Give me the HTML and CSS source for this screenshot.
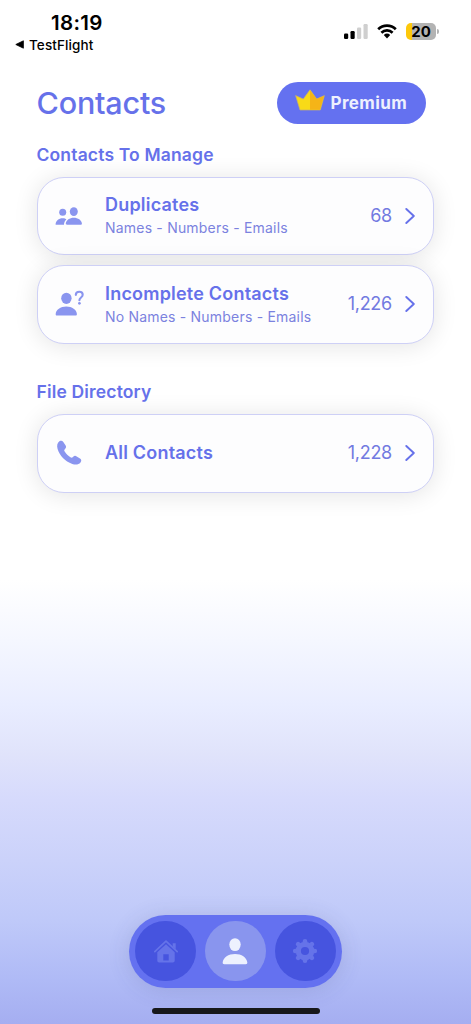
FILE: index.html
```html
<!DOCTYPE html>
<html lang="en">
<head>
<meta charset="utf-8">
<meta name="viewport" content="width=device-width, initial-scale=1">
<title>Contacts</title>
<link rel="stylesheet" href="styles.css">
</head>
<body>
<div class="screen">
  <div class="status">
    <div class="status-left">
      <div class="time"><span>18:19</span></div>
      <div class="back">
        <svg width="9" height="9" viewBox="0 0 9 9"><path d="M.8 4.5 8.4.8v7.4z" fill="#000" stroke="#000" stroke-width=".8" stroke-linejoin="round"/></svg>
        <span>TestFlight</span>
      </div>
    </div>
    <div class="status-right">
      <svg class="signal" width="24" height="16" viewBox="0 0 24 16">
        <rect x="0" y="9.5" width="4.2" height="5.5" rx="1.2" fill="#000"/>
        <rect x="6.5" y="7" width="4.2" height="8" rx="1.2" fill="#000"/>
        <rect x="13" y="3.5" width="4.2" height="11.500" rx="1.2" fill="#cfcfcf"/>
        <rect x="19.500" y="0" width="4.200" height="15" rx="1.2" fill="#cfcfcf"/>
      </svg>
      <svg class="wifi" width="20" height="15" viewBox="0 0 20 15">
        <path d="M1.200 5.200a12.600 12.600 0 0 1 17.600 0M4.400 8.700a8.100 8.100 0 0 1 11.200 0" fill="none" stroke="#000" stroke-width="2.700"/>
        <path d="M6.800 11.100a4.700 4.700 0 0 1 6.400 0L10 14.500z" fill="#000"/>
      </svg>
      <div class="battery"><div class="cell">20</div><i class="tip"></i></div>
    </div>
  </div>

  <header class="header">
    <h1><span>Contacts</span></h1>
    <button class="premium">
      <svg width="30" height="22" viewBox="0 0 30 22">
        <path d="M.6 6.600 8.300 10 15 .8l6.700 9.200 7.700-3.400L25.300 21H5z" fill="#f8da17" stroke="#c9b26b" stroke-width=".7"/>
        <path d="M15 1.200 21.700 10l7.200-3L25 20.700H15z" fill="#f5b417"/>
      </svg>
      <span>Premium</span>
    </button>
  </header>

  <main>
    <h2 class="first"><span>Contacts To Manage</span></h2>
    <a class="card">
      <svg class="icon" width="30" height="30" viewBox="0 0 30 30">
        <circle cx="8.700" cy="11.300" r="3.500"/>
        <path d="M1.600 23.700c0-4 3.200-6.500 7-6.500 2 0 3 .5 3.800 1.200-1.500 1.300-2.400 3-2.400 5.300z"/>
        <ellipse cx="19.800" cy="10.600" rx="4" ry="4.300"/>
        <path d="M12.800 23.700c-.8 0-1.100-.4-1-1.200.3-3.500 3.900-5.800 8-5.800s7.800 2.300 8.100 5.800c.1.800-.2 1.200-1 1.200z"/>
      </svg>
      <div class="label"><b>Duplicates</b><small>Names - Numbers - Emails</small></div>
      <span class="count">68</span>
      <svg class="chev" width="10" height="18" viewBox="0 0 10 18"><path d="m1.300 2 7.500 7-7.500 7"/></svg>
    </a>
    <a class="card">
      <svg class="icon" width="30" height="30" viewBox="0 0 30 30">
        <ellipse cx="12.400" cy="9.300" rx="5.200" ry="5.600"/>
        <path d="M3.100 26.500c-1.100 0-1.500-.6-1.400-1.600.2-4.300 4.800-7.500 10.600-7.500s10.400 3.200 10.600 7.500c0 1-.4 1.600-1.500 1.600z"/>
        <path d="M21.800 5.900c.2-4.300 6.900-4.100 6.900-.1 0 2.700-3.300 2.700-3.300 5.400" fill="none" stroke="#8a95ef" stroke-width="2.100" stroke-linecap="round"/><circle cx="25.400" cy="14.300" r="1.350"/>
      </svg>
      <div class="label"><b>Incomplete Contacts</b><small>No Names - Numbers - Emails</small></div>
      <span class="count">1,226</span>
      <svg class="chev" width="10" height="18" viewBox="0 0 10 18"><path d="m1.300 2 7.500 7-7.500 7"/></svg>
    </a>
    <h2 class="second"><span>File Directory</span></h2>
    <a class="card">
      <svg class="icon" width="30" height="30" viewBox="0 0 30 30">
        <path d="M5.700 3.100C7 2.300 8.400 2.600 9.300 3.900l2.200 3.300c.9 1.400.7 2.500-.5 3.700-1 1-.9 1.600-.3 2.600 1.500 2.300 3.400 4.200 5.700 5.700 1 .7 1.600.7 2.600-.3 1.200-1.200 2.300-1.400 3.700-.5l3.300 2.200c1.500 1 1.700 2.400.5 3.800-1.800 2.200-4.800 2.700-8.200 1.500C10.900 23.300 5.700 17.700 3.600 11c-1-3.200-.3-6.300 2.100-7.900z"/>
      </svg>
      <div class="label single"><b>All Contacts</b></div>
      <span class="count">1,228</span>
      <svg class="chev" width="10" height="18" viewBox="0 0 10 18"><path d="m1.300 2 7.500 7-7.500 7"/></svg>
    </a>
  </main>

  <footer>
    <nav>
      <div class="tab">
        <svg width="26" height="26" viewBox="0 0 26 26">
          <path d="M1.800 13.600 13 3.200l11.200 10.400" fill="none" stroke="#6573e9" stroke-width="1.700" stroke-linecap="round" stroke-linejoin="round"/>
          <path d="M19.700 5.200h3v6l-3-2.800z" fill="#6573e9"/>
          <path d="M4.300 14.200 13 6.200l8.700 8v8.400c0 1.200-.7 1.900-1.900 1.900H6.200c-1.200 0-1.900-.7-1.900-1.900zM10.300 16.200v6.400h5.400v-6.400z" fill="#6573e9" fill-rule="evenodd"/>
        </svg>
      </div>
      <div class="tab active">
        <svg width="28" height="30" viewBox="0 0 28 30">
          <ellipse cx="14" cy="8.600" rx="5.700" ry="6.400" fill="#edf1fe"/>
          <path d="M3.400 28.200c-1.300 0-1.900-.7-1.700-1.900.7-4.900 5.700-8.300 12.300-8.300s11.600 3.400 12.300 8.300c.2 1.200-.4 1.900-1.700 1.900z" fill="#edf1fe"/>
        </svg>
      </div>
      <div class="tab">
        <svg width="26" height="26" viewBox="-13 -13 26 26">
          <g stroke="#6573e9" stroke-width="4.600" stroke-linecap="round"><path d="M0-9.800V-8M0 9.800V8M-9.800 0H-8M9.800 0H8M-6.900-6.900l1.200 1.200M6.900 6.900 5.700 5.700M-6.900 6.900l1.200-1.200M6.900-6.900 5.700-5.700"/></g>
          <circle r="6.700" fill="none" stroke="#6573e9" stroke-width="5.200"/>
        </svg>
      </div>
    </nav>
    <div class="home"></div>
  </footer>
</div>
</body>
</html>
```
FILE: styles.css
```css
* { box-sizing: border-box; }
body { margin: 0; font-family: Inter, "Liberation Sans", sans-serif; color: #6671ea; }
svg { display: block; flex: none; }
.screen {
  width: 471px; height: 1024px; overflow: hidden;
  display: flex; flex-direction: column;
  background: linear-gradient(#fff 0, #fff 580px, #f5f7ff 640px, #e9edff 705px, #e0e3fb 755px, #d6dafc 800px, #cbd2fa 860px, #bfc9f9 920px, #afbaf6 980px, #a5aef1 1024px);
}
.status { height: 70px; display: flex; justify-content: space-between; color: #000; }
.status-left { padding: 9px 0 0 15px; }
.time { padding-left: 36px; height: 26px; line-height: 27px; font-size: 20.500px; font-weight: 600; letter-spacing: .3px; }
.back { display: flex; align-items: center; gap: 5px; height: 19px; font-size: 13.500px; font-weight: 500; letter-spacing: .1px; }
.status-right { display: flex; padding: 23px 32px 0 0; }
.signal { margin-top: 1px; }
.wifi { margin: 1px 9px 0 9px; }
.battery { display: flex; align-items: center; height: 17px; }
.cell { width: 30px; height: 17px; border-radius: 5px; background: linear-gradient(90deg, #fdc80b 6px, #b3b3b3 6px); font-size: 15px; line-height: 17px; font-weight: 700; text-align: center; }
.tip { width: 2px; height: 5px; margin-left: 1px; border-radius: 0 2px 2px 0; background: #b3b3b3; }

.header { display: flex; justify-content: space-between; padding: 11.500px 45px 0 36.500px; height: 72px; }
h1 { margin: 0; font-size: 30.500px; line-height: 42px; font-weight: 500; letter-spacing: -.2px; }
.premium { width: 149.500px; height: 42.500px; border: 0; border-radius: 22px; background: #6471f0; color: #eef0fe; font: 700 17px/42px Inter, sans-serif; letter-spacing: .4px; display: flex; align-items: center; padding: 0 0 0 18px; gap: 6px; }
.premium svg { margin-top: -5px; }

main { padding: 0 37px 0 36.500px; }
h2 { margin: 0; height: 34.500px; line-height: 25px; font-size: 17.500px; font-weight: 600; letter-spacing: .16px; }
h2.second { margin-top: 35.500px; height: 35px; }
.card { height: 78.500px; display: flex; align-items: center; padding: 0 18px 0 16px; border: 1.500px solid #ced0f6; border-radius: 27px; background: #fdfdfe; box-shadow: 0 2px 24px rgba(0,0,0,.11); }
.card + .card { margin-top: 10px; }
.icon { fill: #8a95ef; }
.label { flex: 1; padding: 1px 0 0 21.500px; display: flex; flex-direction: column; }
.label.single { padding-top: 0; }
.label b { font-size: 18px; line-height: 24px; font-weight: 600; letter-spacing: .2px; }
.label small { font-size: 14px; line-height: 22px; color: #7b82df; letter-spacing: .2px; }
.count { font-size: 18px; line-height: 24px; color: #727ae1; letter-spacing: -.25px; margin-right: 13px; }
.chev path { fill: none; stroke: #6671ea; stroke-width: 1.900; stroke-linecap: round; stroke-linejoin: round; }

footer { margin-top: auto; display: flex; flex-direction: column; align-items: center; }
nav { width: 212.500px; height: 72.500px; border-radius: 37px; background: #6471f0; display: flex; justify-content: center; align-items: center; gap: 9.700px; box-shadow: 0 2px 22px rgba(60,70,120,.16); }
.tab { width: 60.300px; height: 60.300px; border-radius: 50%; background: #4654df; display: flex; align-items: center; justify-content: center; }
.tab.active { background: #8995ee; }
.home { width: 168px; height: 6px; border-radius: 3px; background: #17181b; margin: 20.500px 0 10px; }
```
